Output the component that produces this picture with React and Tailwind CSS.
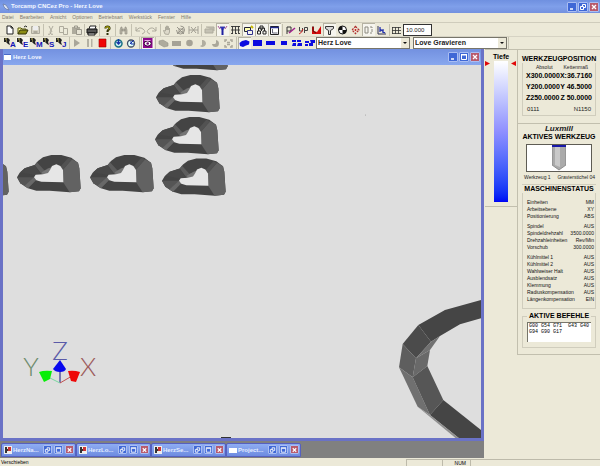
import React from 'react';

function Svg({ children, className = 'w-[13px] h-3' }) {
  return (
    <svg viewBox="0 0 13 12" className={`${className} shrink-0`} fill="none" aria-hidden="true">
      {children}
    </svg>
  );
}

function Tool({ label, pressed, children }) {
  return (
    <button
      type="button"
      aria-label={label}
      className={`h-[13px] w-[13px] shrink-0 ${pressed ? 'bg-[#f6f5ee] shadow-[inset_1px_1px_0_#b5b2a2]' : ''}`}
    >
      <Svg>{children}</Svg>
    </button>
  );
}

function Sep({ tight }) {
  return (
    <span className={`flex shrink-0 justify-center ${tight ? 'w-[2px]' : 'w-[3px]'}`}>
      <span className="h-3 w-px bg-[#c4c1b0]" />
    </span>
  );
}

const g = '#aeab9d';

const icons = {
  neu: <path d="M4 2h4l2 2v6H4z M8 2v2h2" fill="#fff" stroke="#222" />,
  open: (
    <>
      <path d="M2 10V4h3l1 1h4v2" fill="#ffff9a" stroke="#55550a" />
      <path d="M2 10l2-4h8l-2 4z" fill="#8c8c14" stroke="#33330a" />
      <path d="M8 3q2-2 3 0" stroke="#222" />
    </>
  ),
  save: (
    <>
      <path d="M2.500 2.500h8v7h-8z" stroke={g} fill="#d7d4c5" />
      <path d="M4 2h5v4H4z" fill="#eee" />
      <path d="M4.500 7h4v3h-4z" fill={g} />
    </>
  ),
  cut: <path d="M5 2l3 6M9 2L6 8M4 10a1 1 0 1 0 2-2M7 8a1 1 0 1 0 2 2" stroke={g} />,
  copy: <path d="M2.500 2.500h4v6h-4zM6.500 4.500h4v6h-4z" stroke={g} fill="#eceada" />,
  paste: (
    <>
      <path d="M2 3h8v7H2z" fill={g} />
      <path d="M4.500 2h3v2h-3zM6.500 5.500h5v5h-5z" fill="#e6e3d4" stroke="#99968a" />
    </>
  ),
  print: (
    <>
      <path d="M4 5l1-3h6l-1 3" fill="#fff" stroke="#222" />
      <path d="M2 5h10v4H2z" fill="#555" stroke="#111" />
      <path d="M3 9h7v2H3z" fill="#ddd" stroke="#111" />
    </>
  ),
  help: (
    <>
      <path d="M4.500 4.500q0-2 2-2t2 1.800q0 1-1 1.500T6.500 8" stroke="#33330a" strokeWidth="2.200" />
      <path d="M4.500 4.200q0-1.500 2-1.500t2 1.500q0 1-1 1.500" stroke="#c4c000" strokeWidth=".9" />
      <path d="M5.500 9h2v2h-2z" fill="#33330a" />
    </>
  ),
  find: <path d="M3 10V6l1-3h1v7zM8 10V3h1l1 3v4zM5 5h3v2H5z" fill="#b9b6a6" stroke="#8f8c80" strokeWidth=".6" />,
  undo: <path d="M3 3v4h4M3 7q3-5 7-2t-1 5" stroke={g} />,
  redo: <path d="M10 3v4H6M10 7Q7 2 3 5t1 5" stroke={g} />,
  hand: <path d="M4 10L2.500 6.500 4.500 7V3h1v3V2h1v4-3.500h1V6l1-2v4l-1 2.500z" fill="#ddd9ca" stroke={g} />,
  rotate: <path d="M3 3l7 7M10 3L3 10M6.500 2a4 4 0 1 1-4 4M5 5h4v3H5z" stroke="#98958a" />,
  dim: <path d="M2 2v8M2 6h9M11 2v8M4 3l5 6M9 3L4 9" stroke="#a19e92" />,
  layer: <path d="M2 5h8v4H2zM3 3h8v4" fill="#c4c1b3" stroke={g} />,
  tool: (
    <>
      <path d="M4 3h5L6.500 6z" fill="#2222c0" stroke="#44a" />
      <path d="M6.500 5v6" stroke="#2020a0" strokeWidth="2" />
      <path d="M2 2l2 3M11 2L9 5" stroke="#a59" />
    </>
  ),
  gridT: <path d="M2 2.500h9M2 6h9M3.500 2v8M6.500 2v8M9.500 2v8M2 9.500h2m2 0h2m2 0h1" stroke="#333" strokeWidth=".9" />,
  box: (
    <>
      <path d="M2.500 3.500h6v4h-6z" fill="#ffffb0" stroke="#223" />
      <path d="M5.500 6.500h5v4h-5z" fill="#f5f4ea" stroke="#33338c" />
      <path d="M9 2l2 2" stroke="#c9b900" strokeWidth="2" />
    </>
  ),
  tree: <path d="M5 2h3v3H5zM2.500 7h3v3h-3zM8 7h3v3H8zM6.500 5v2M3.500 7V4h6v3" stroke="#222" />,
  windowI: (
    <>
      <path d="M2.500 2.500h8v8h-8z" fill="#fff" stroke="#222" />
      <path d="M2 3.500h9" stroke="#222a88" strokeWidth="1.500" />
      <path d="M4.500 5v4h5" stroke="#667" />
    </>
  ),
  contour: (
    <>
      <path d="M3 3h4v4H3zM3 7v3" stroke="#333" />
      <path d="M5 9l6-5" stroke="#a0208c" strokeWidth="1.500" />
    </>
  ),
  path: (
    <>
      <path d="M2.500 3v4h3V4M7.500 9V3.500h3v3h-3" stroke="#444" />
      <path d="M2 10q3-1 4-5" stroke="#c22" />
    </>
  ),
  cutRed: (
    <>
      <path d="M2 3h2v4l3 1 4-6v8H2z" fill="#d40c0c" />
      <path d="M3 2v5l3 2" stroke="#511" />
    </>
  ),
  funnel: <path d="M2.500 2.500h8v2l-3 2v4h-2v-4l-3-2z" fill="#d8d8d8" stroke="#333" />,
  target: (
    <>
      <circle cx="6.500" cy="6" r="4" fill="#fff" stroke="#111" />
      <path d="M6.500 6V2a4 4 0 0 0-4 4zM6.500 6v4a4 4 0 0 0 4-4z" fill="#111" />
    </>
  ),
  diamond: (
    <>
      <path d="M6.500 2.500L10 6 6.500 9.500 3 6z" stroke="#b03030" strokeWidth="1.300" strokeDasharray="2 1" />
      <path d="M6.500 5v2M5.500 6h2" stroke="#c22" />
    </>
  ),
  panel: <path d="M3 3h3v6H3zM8 3h2v1M8 9h2M10 5v3" stroke="#8c8a80" />,
  chart: (
    <>
      <path d="M3 2v8h8" stroke="#335" />
      <path d="M5 3v5M8 5v4M5 5l5 4" stroke="#2a38b0" strokeWidth="1.300" />
    </>
  ),
  grid: <path d="M2.500 3v7M5.500 3v7M8.500 3v7M2 3.500h9M2 6.500h9M2 9.500h9" stroke="#333" strokeWidth=".8" />,
  play: <path d="M4 2l6 4-6 4z" fill="#a9a69a" />,
  pause: <path d="M4 2h2v8H4zM8 2h1.500v8H8z" fill="#b4b1a3" />,
  stop: <path d="M3 2h7v8H3z" fill="#f00505" stroke="#900" strokeWidth=".6" />,
  cycle: (
    <>
      <circle cx="6.500" cy="6.500" r="3.500" fill="#c8f0f0" stroke="#177083" strokeWidth="1.500" />
      <path d="M6.500 2v5M4.500 5l2 2 2-2" stroke="#1832a8" strokeWidth="1.300" />
    </>
  ),
  clock: (
    <>
      <circle cx="6" cy="6.500" r="3.500" fill="#dff" stroke="#444f66" strokeWidth="1.300" />
      <path d="M5 7l4-4M6 4v3h3" stroke="#1832a8" />
    </>
  ),
  purple: (
    <>
      <path d="M2 1h9.500v10H2z" fill="#8d088d" />
      <ellipse cx="6.700" cy="6.500" rx="3.500" ry="2.600" fill="#fff" stroke="#300030" />
      <circle cx="6.700" cy="6.500" r="1.300" fill="#700070" />
      <path d="M3.500 3.500h6" stroke="#e9a8e9" />
    </>
  ),
  g1: <path d="M2 4l4-1 5 3v3l-4 1-5-3z" fill={g} stroke="#96938a" strokeWidth=".6" />,
  g2: <path d="M2 4h9v5H2z" fill="#a5a296" />,
  g3: <circle cx="6.500" cy="6" r="3.300" fill="#a5a296" />,
  g4: <path d="M6 3a3.500 3.500 0 1 1-2 6l2-1z" fill="#b1aea0" />,
  g5: <path d="M7 6V3a3.500 3.500 0 1 1-4 4h3z" fill="#aaa799" />,
  g6: <path d="M3 5V3h2M8 3h2v2M10 8v2H8M5 10H3V8M5 5.500h3M5 7.500h3" stroke="#aaa799" strokeWidth="1.500" />,
  b1: <path d="M1.500 6L4 4l4-1 3.500 1.500-.5 3L8 8.500 5 10 2 9z" fill="#0b0be0" />,
  b2: <path d="M2 3h9v6H2z" fill="#0b0be0" />,
  b3: <path d="M2 4h9v4H2z" fill="#0b0be0" />,
  b4: <path d="M4 4h6v4H4z" fill="#0b0be0" />,
  b5: <path d="M2 3h4v2H2zM7 3h4v2H7zM3 6h3v3H2zM8 6h4v3H7z" fill="#0b0be0" />,
  b6: <path d="M2 4h4v2H2zM7 3h5v3H8zM2 7h3v2H2zM6 6h4v3H6z" fill="#0b0be0" />,
};

const topTools = [
  ['Neu', 'neu'], ['Öffnen', 'open'], ['Speichern', 'save'], 'tight',
  ['Ausschneiden', 'cut'], ['Kopieren', 'copy'], ['Einfügen', 'paste'], 'tight',
  ['Drucken', 'print'], null,
  ['Hilfe', 'help'], null,
  ['Suchen', 'find'], null,
  ['Rückgängig', 'undo'], ['Wiederholen', 'redo'], 'tight',
  ['Verschieben', 'hand'], ['Drehen', 'rotate'], ['Zoom', 'dim'], null,
  ['Ebene', 'layer'], ['Werkzeug', 'tool', true], ['Raster', 'gridT'], ['Rohteil', 'box', true],
  ['Struktur', 'tree', true], ['Fenster', 'windowI', true], null,
  ['Kontur', 'contour'], ['Bahn', 'path'], ['Schnitt', 'cutRed'], ['Filter', 'funnel', true],
  ['Nullpunkt', 'target'], ['Mittelpunkt', 'diamond'], ['Ansicht', 'panel', true], ['Diagramm', 'chart'], 'tight',
  ['Gitter', 'grid'],
];

const runTools = [
  ['Start', 'play'], ['Pause', 'pause'], ['Stopp', 'stop'], null,
  ['Zyklus', 'cycle'], ['Zeit', 'clock'], null,
  ['Simulation', 'purple', true], null,
  ['Körper', 'g1'], ['Block', 'g2'], ['Kreis', 'g3'], ['Bogen', 'g4'], ['Segment', 'g5'], ['Auswahl', 'g6'], null,
  ['Perspektive', 'b1', true], ['Oben', 'b2'], ['Vorne', 'b3'], ['Seite', 'b4'], ['Zweifach', 'b5'], ['Vierfach', 'b6'],
];

function renderTools(list) {
  return list.map((t, i) =>
    Array.isArray(t) ? (
      <Tool key={i} label={t[0]} pressed={t[2]}>{icons[t[1]]}</Tool>
    ) : (
      <Sep key={i} tight={t === 'tight'} />
    )
  );
}

function Mode({ letter, pressed }) {
  return (
    <button type="button" className={`flex h-3 w-[13px] shrink-0 items-end pl-px ${pressed ? 'bg-[#f6f5ee]' : ''}`}>
      <svg viewBox="0 0 6 9" className="h-[9px] w-[6px] shrink-0 self-start" aria-hidden="true">
        <path d="M0 1h4l2 2-1 2 1 3-2-1-2-2H0z" fill="#222" />
        <path d="M1 2h2M2 4h1" stroke="#c8c060" />
      </svg>
      <span className="text-[8px] leading-[9px] font-bold text-[#1414b8]">{letter}</span>
    </button>
  );
}

function WinButtons({ small, restore }) {
  const base = `flex items-center justify-center rounded-[1px] border border-[#a9bdf2] ${small ? 'h-[9px] w-[9px]' : 'h-[10px] w-[10px]'}`;
  return (
    <div className={`flex shrink-0 ${small ? 'gap-[2px]' : 'gap-px'}`}>
      {!small && (
        <button type="button" aria-label="Minimieren" className={`${base} bg-[#3f68d6]`}>
          <svg viewBox="0 0 8 8" className="size-2"><path d="M2 6h3" stroke="#fff" strokeWidth="1.500" /></svg>
        </button>
      )}
      {(small || restore) && (
        <button type="button" aria-label="Wiederherstellen" className={`${base} bg-[#3f68d6]`}>
          <svg viewBox="0 0 8 8" className="size-2" fill="none"><path d="M3.500 3V1.500h3v3H5M1.500 3.500h3v3h-3z" stroke="#fff" /></svg>
        </button>
      )}
      {(small || !restore) && (
        <button type="button" aria-label="Maximieren" className={`${base} bg-[#3f68d6]`}>
          <svg viewBox="0 0 8 8" className="size-2" fill="none"><path d="M1.500 2v4.500h5V2zM1 1.500h6" stroke="#fff" /></svg>
        </button>
      )}
      <button type="button" aria-label="Schließen" className={`${base} bg-[#b85a6c]`}>
        <svg viewBox="0 0 8 8" className="size-2"><path d="M2 2l4 4M6 2L2 6" stroke="#fff" strokeWidth="1.300" /></svg>
      </button>
    </div>
  );
}

function Combo({ label, value }) {
  return (
    <div className="relative h-3 w-[94px] shrink-0">
      <select
        aria-label={label}
        defaultValue={value}
        className="block h-3 w-full appearance-none border border-[#77756a] bg-white pl-px text-[7px] leading-[10px] font-bold text-[#222]"
      >
        <option>{value}</option>
      </select>
      <svg viewBox="0 0 8 10" className="pointer-events-none absolute top-px right-px h-[10px] w-2 bg-[#ece9d8]" aria-hidden="true">
        <path d="M2 4h4L4 6z" fill="#111" />
      </svg>
    </div>
  );
}

function Heart({ x, y }) {
  return (
    <g transform={`translate(${x} ${y}) scale(.3333)`}>
      <path
        fill="#444"
        d="M0 67L8 53 23 40 53 30 63 18 78 7 103 0H133L163 8 183 23 187 40 191 100 186 109 158 112 98 107H58L33 100 10 85Z"
      />
      <path d="M137 45L165 13 183 23 187 40 191 100 186 109 158 112 138 81Z" fill="#626262" />
      <path d="M130 35L154 8 165 13 137 45Z" fill="#525252" />
      <path d="M0 67L51 67 58 74 33 100 10 85Z" fill="#555" />
      <path d="M51 67L58 74 33 100 22 93Z" fill="#686868" />
      <path d="M53 30L60 22 82 46 98 40 100 50 90 58 76 60Z" fill="#5d5d5d" />
      <path d="M74 52L95 40 103 37 100 48 93 57 78 59Z" fill="#757575" />
      <path d="M10 52L23 40 53 30 70 56 54 60Z" fill="#484848" />
      <path d="M51 67L58 76 73 80 139 82 138 45 130 33 118 28 105 33 99 45 93 54 78 58 56 59Z" fill="#e6e6e6" />
    </g>
  );
}

function Scene() {
  return (
    <svg viewBox="3 65 478 373" preserveAspectRatio="xMinYMin slice" className="block h-full w-full" role="img" aria-label="Herz Love">
      <Heart x={17} y={155} />
      <Heart x={90} y={155} />
      <Heart x={162} y={158.500} />
      <Heart x={155} y={117} />
      <Heart x={156} y={75} />
      <Heart x={164} y={33} />
      <Heart x={-55} y={158.500} />
      <g transform="translate(380 290) scale(.3333)">
        <path d="M303 30L195 60 115 105 153 155 180 138 240 103 303 85Z" fill="#454545" />
        <path d="M115 105L68 162 108 205 153 155Z" fill="#4b4b4b" />
        <path d="M153 155L180 138 150 180 108 205Z" fill="#717171" />
        <path d="M68 162L57 232 98 262 108 205Z" fill="#5e5e5e" />
        <path d="M108 205L150 180 142 228 98 262Z" fill="#696969" />
        <path d="M57 232L98 262 150 375 113 350Z" fill="#707070" />
        <path d="M98 262L142 228 190 330 150 375Z" fill="#565656" />
        <path d="M150 375L190 330 303 420 303 447 240 447Z" fill="#454545" />
        <path d="M113 350L150 375 240 447 230 447Z" fill="#8f8f8f" />
      </g>
      <g fontSize="26" fontWeight="300" fontFamily="Lato, sans-serif" textAnchor="middle">
        <text x="60" y="360" fill="#5a5aa8">Z</text>
        <text x="31" y="376" fill="#6c8a6c">Y</text>
        <text x="88" y="376" fill="#9c5a5a">X</text>
      </g>
      <path d="M60 383V370" stroke="#101080" />
      <path d="M60 383L50 378" stroke="#7ad8a0" />
      <path d="M60 383L72 376" stroke="#c05050" />
      <path d="M60 360l6 9q-1 3-6 3t-7-3z" fill="#0808ee" />
      <path d="M39 372q5-2 13-1l-2 8-6 3z" fill="#08ee08" />
      <path d="M68 371q6-1 12 1l-4 10-5-1z" fill="#ee0808" />
      <path d="M221 437.500h10" stroke="#333" />
      <circle cx="365.500" cy="115" r=".5" fill="#999" />
    </svg>
  );
}

const status = [
  [['Einheiten', 'MM'], ['Arbeitsebene', 'XY'], ['Positionierung', 'ABS']],
  [['Spindel', 'AUS'], ['Spindeldrehzahl', '3500.0000'], ['Drehzahleinheiten', 'Rev/Min'], ['Vorschub', '300.0000']],
  [['Kühlmittel 1', 'AUS'], ['Kühlmittel 2', 'AUS'], ['Wahlweiser Halt', 'AUS'], ['Ausblendsatz', 'AUS'], ['Klemmung', 'AUS'], ['Radiuskompensation', 'AUS'], ['Längenkompensation', 'EIN']],
];

function Heading({ children }) {
  return <h2 className="text-center text-[7px] leading-2 font-bold whitespace-nowrap text-black">{children}</h2>;
}

function InfoPanel() {
  return (
    <aside className="w-[83px] shrink-0 self-start border-b border-l border-[#c2bfae] pb-[6px]">
      <section className="border-t border-[#c2bfae] px-1 pt-[5px] pb-[7px]">
        <Heading>WERKZEUGPOSITION</Heading>
        <div className="border-x border-b border-[#d0cdbd] px-[3px] pb-[2px]">
          <div className="flex justify-between pr-1 pl-[10px] text-[5px] leading-2">
            <span>Absolut</span><span>Kettenmaß</span>
          </div>
          <div className="flex flex-col gap-[3px] pt-px text-[7px] leading-2 font-bold whitespace-nowrap text-black">
            {[['X300.0000', 'X:36.7160'], ['Y200.0000', 'Y 46.5000'], ['Z250.0000', 'Z 50.0000']].map(([a, b]) => (
              <div key={a} className="flex justify-between"><span>{a}</span><span>{b}</span></div>
            ))}
          </div>
          <div className="flex justify-between px-px pt-[3px] text-[6px] leading-2">
            <span>0111</span><span>N1150</span>
          </div>
        </div>
      </section>
      <section className="border-t border-[#c2bfae] px-1 pt-px">
        <p className="text-center text-[8px] leading-2 font-bold italic">Luxmill</p>
        <Heading>AKTIVES WERKZEUG</Heading>
        <div className="mx-1 mt-[3px] flex h-7 justify-center border border-[#5e5c54] bg-white">
          <svg viewBox="0 0 14 26" className="h-[26px] w-[14px]" aria-hidden="true">
            <path d="M0 2h14v18l-7 5-7-5z" fill="#aaa" />
            <path d="M3 2h5v20l-5-2z" fill="#c9c9c9" />
            <path d="M0 0h14v2H0z" fill="#1818a8" />
            <path d="M0 2v18l7 5 7-5V2" stroke="#777" strokeWidth=".7" fill="none" />
          </svg>
        </div>
        <div className="flex justify-between pt-[2px] pr-px pb-[3px] pl-[2px] text-[5px] leading-[7px] whitespace-nowrap">
          <span>Werkzeug 1</span><span>Gravierstichel 04</span>
        </div>
        <div className="border-t border-[#d0cdbd]"><Heading>MASCHINENSTATUS</Heading></div>
        <div className="flex flex-col gap-[3px] border-x border-b border-[#d0cdbd] pt-[6px] pr-px pb-[5px] pl-1 text-[5px] leading-[7px] text-[#111]">
          {status.map((group, i) => (
            <dl key={i}>
              {group.map(([k, v]) => (
                <div key={k} className="flex justify-between"><dt>{k}</dt><dd>{v}</dd></div>
              ))}
            </dl>
          ))}
        </div>
        <fieldset className="mt-[3px] border border-[#d0cdbd] px-1 pt-[2px] pb-[5px]">
          <legend className="mx-auto px-[2px]"><Heading>AKTIVE BEFEHLE</Heading></legend>
          <textarea
            aria-label="Aktive Befehle"
            readOnly
            defaultValue={'G00 G54 G71  G43 G40\nG94 G90 G17'}
            className="block h-5 w-full resize-none overflow-hidden border-t border-l border-[#77756a] bg-white pl-px font-['Liberation_Mono',monospace] text-[5px] leading-[6px] text-black"
          />
        </fieldset>
      </section>
    </aside>
  );
}

function DepthBar() {
  return (
    <aside className="flex w-8 shrink-0 flex-col self-start border-t border-b border-[#c2bfae] pt-[3px] pb-1">
      <h2 className="text-center text-[7px] leading-2 font-bold text-black">Tiefe</h2>
      <div className="flex justify-between pr-px">
        <svg viewBox="0 0 5 5" className="size-[5px]"><path d="M0 0l5 2.500L0 5z" fill="#e00808" /></svg>
        <div className="h-[141px] w-[14px] bg-linear-to-b from-white via-[#8f8fff] to-[#0000f4]" />
        <svg viewBox="0 0 5 5" className="size-[5px]"><path d="M5 0L0 2.500 5 5z" fill="#e00808" /></svg>
      </div>
    </aside>
  );
}

function MiniWindow({ title, project }) {
  return (
    <div className="flex h-[14px] w-[75px] shrink-0 items-center rounded-t-[2px] border border-[#5560c0] bg-linear-to-b from-[#8fadf2] to-[#6d8be0] pr-px pl-[2px]">
      <svg viewBox="0 0 8 8" className="size-2 shrink-0" aria-hidden="true">
        {project ? (
          <path d="M0 2h8v5H0z" fill="#fff" />
        ) : (
          <>
            <path d="M0 0h8v8H0z" fill="#eee" />
            <path d="M1 1h2v6H1zM3 3h2v2H3z" fill="#333" />
            <path d="M4 1h3v4H4z" fill="#c33" />
          </>
        )}
      </svg>
      <span className="flex-1 pl-px text-[6px] leading-[10px] font-bold whitespace-nowrap text-[#e4ecff]">{title}</span>
      <WinButtons small />
    </div>
  );
}

export default function App() {
  return (
    <div className="flex h-screen min-h-[420px] w-full flex-col overflow-hidden bg-[#ece9d8] font-['Liberation_Sans',Arial,sans-serif] text-[#222]">
      <header className="flex h-[13px] shrink-0 items-center bg-linear-to-b from-[#6f90e0] via-[#7f9fea] to-[#7391df] pr-px pl-[2px]">
        <svg viewBox="0 0 8 8" className="mr-px size-2" aria-hidden="true">
          <path d="M1 1l3 1 2 3 1 2-3-1-2-2z" fill="#d9e2f4" stroke="#6577a0" strokeWidth=".7" />
        </svg>
        <h1 className="flex-1 text-[6px] leading-[11px] font-bold text-[#f2f6ff]">Torcamp CNCez Pro - Herz Love</h1>
        <WinButtons restore />
      </header>

      <nav className="flex h-[9px] shrink-0 items-center gap-[6px] px-[2px] text-[5px] leading-[7px] text-[#7d7a6e]">
        {['Datei', 'Bearbeiten', 'Ansicht', 'Optionen', 'Betriebsart', 'Werkstück', 'Fenster', 'Hilfe'].map((m) => (
          <button type="button" key={m}>{m}</button>
        ))}
      </nav>

      <div className="flex h-[14px] shrink-0 items-center border-t border-[#cfccbc] pl-[3px]">
        {renderTools(topTools)}
        <input
          aria-label="Rasterweite"
          defaultValue="10.000"
          className="h-3 w-[29px] shrink-0 border border-[#333] bg-white pl-[2px] text-[6px] leading-[10px]"
        />
      </div>

      <div className="flex h-[13px] shrink-0 items-center border-t border-[#d6d3c4] pl-[3px]">
        {['A', 'E', 'M', 'S', 'J'].map((l) => <Mode key={l} letter={l} pressed={l === 'E'} />)}
        <Sep tight />
        {renderTools(runTools)}
        <div className="flex gap-[3px]">
          <Combo label="Programm" value="Herz Love" />
          <Combo label="Bearbeitung" value="Love Gravieren" />
        </div>
        <Sep />
      </div>

      <div className="flex min-h-0 flex-1">
        <main className="flex min-w-0 flex-1 flex-col bg-[#808080]">
          <section className="flex min-h-0 flex-1 flex-col border-x-[3px] border-b-[3px] border-[#6a72c6]">
            <div className="flex h-4 shrink-0 items-center bg-linear-to-b from-[#7391e0] to-[#88a7ee] pr-px">
              <svg viewBox="0 0 9 8" className="h-2 w-[9px]" aria-hidden="true">
                <path d="M1 1h7v6H1z" fill="#fff" />
                <path d="M1 1h7v1H1z" fill="#4a6ac8" />
              </svg>
              <h2 className="flex-1 pl-px text-[6px] leading-[11px] font-bold text-[#f2f6ff]">Herz Love</h2>
              <WinButtons />
            </div>
            <div className="min-h-0 flex-1 bg-[#dedede]"><Scene /></div>
          </section>
          <div className="flex h-[17px] shrink-0 items-center pl-px">
            <MiniWindow title="HerzNa..." />
            <MiniWindow title="HerzLo..." />
            <MiniWindow title="HerzSe..." />
            <MiniWindow title="Project..." project />
          </div>
        </main>
        <div className="flex shrink-0 pl-px">
          <DepthBar />
          <InfoPanel />
        </div>
      </div>

      <footer className="flex h-2 shrink-0 items-center text-[5px] leading-[7px] text-black">
        <span className="flex-1 pl-px">Verschieben</span>
        <span className="h-[7px] w-9 border-t border-l border-[#bdbaaa]" />
        <span className="h-[7px] w-7 border-t border-l border-[#bdbaaa] pr-1 text-right">NUM</span>
        <span className="h-[7px] w-[130px] border-t border-l border-[#bdbaaa]" />
      </footer>
    </div>
  );
}
